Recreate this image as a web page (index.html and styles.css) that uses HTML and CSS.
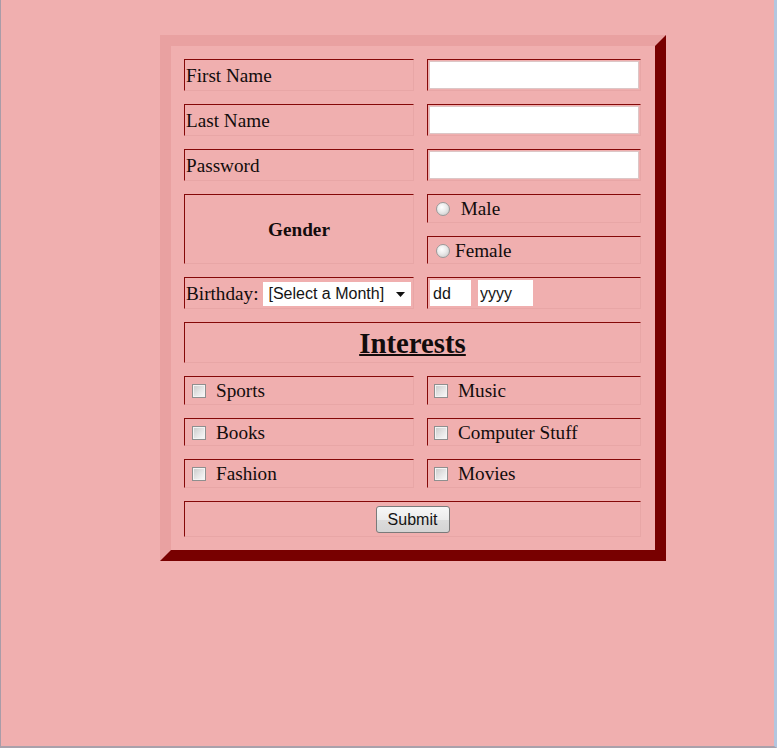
FILE: index.html
```html
<!DOCTYPE html>
<html lang="en">
<head>
<meta charset="utf-8">
<title>Registration Form</title>
<link rel="stylesheet" href="styles.css">
</head>
<body>
<div class="screen">
  <form class="form">
    <div class="cell label">First Name</div>
    <div class="cell field"><input class="text" type="text"></div>

    <div class="cell label">Last Name</div>
    <div class="cell field"><input class="text" type="text"></div>

    <div class="cell label">Password</div>
    <div class="cell field"><input class="text" type="password"></div>

    <div class="cell gender">Gender</div>
    <div class="cell option"><input class="radio" type="radio" name="g"><span class="male">&nbsp;Male</span></div>
    <div class="cell option"><input class="radio" type="radio" name="g"><span class="female">Female</span></div>

    <div class="cell label">Birthday:<span class="select-wrap"><select class="month"><option>[Select a Month]</option></select><svg class="arrow" width="9" height="5" viewBox="0 0 9 5"><polygon points="0,0 9,0 4.5,5" fill="#111"/></svg></span></div>
    <div class="cell date"><input class="dd" type="text" value="dd"><input class="yyyy" type="text" value="yyyy"></div>

    <div class="cell heading"><span>Interests</span></div>

    <div class="cell check"><input class="box" type="checkbox"><span>Sports</span></div>
    <div class="cell check right"><input class="box" type="checkbox"><span>Music</span></div>

    <div class="cell check"><input class="box" type="checkbox"><span>Books</span></div>
    <div class="cell check right"><input class="box" type="checkbox"><span>Computer Stuff</span></div>

    <div class="cell check"><input class="box" type="checkbox"><span>Fashion</span></div>
    <div class="cell check right"><input class="box" type="checkbox"><span>Movies</span></div>

    <div class="cell submit"><button class="btn" type="button">Submit</button></div>
  </form>
</div>
</body>
</html>
```
FILE: styles.css
```css
html, body {
  margin: 0;
  padding: 0;
  background: #f0afaf;
}

.screen {
  box-sizing: border-box;
  height: 748px;
  padding: 35px 0 0 159px;
  border-left: 1px solid #a99ca8;
  border-right: 3px solid #b3c6df;
  border-bottom: 2px solid #aaa1ab;
  font-family: "Liberation Serif", "Times New Roman", serif;
  font-size: 19.2px;
  color: #120c0c;
}

.form {
  display: grid;
  grid-template-columns: 230px 214px;
  grid-template-rows: 32px 32px 32px 29px 28px 32px 41px 29px 28px 29px 36px;
  gap: 13px;
  width: max-content;
  margin: 0;
  padding: 13px 14px 13px 13px;
  border: 11px solid;
  border-color: #e9a1a1 #780000 #780000 #e9a1a1;
  background: #f0afaf;
}

.cell {
  box-sizing: border-box;
  border: 1px solid;
  border-color: #850808 #e8a6a6 #e8a6a6 #850808;
  display: flex;
  align-items: center;
  white-space: nowrap;
}

.label {
  padding: 2px 0 0 1px;
}

.field {
  padding: 1px;
}

.text {
  box-sizing: border-box;
  width: 210px;
  height: 28px;
  margin: 0;
  border: 1px solid #dcc6c6;
  background: #fff;
}

.gender {
  grid-row: span 2;
  justify-content: center;
  padding-top: 2px;
  font-weight: bold;
}

.option {
  padding: 1px 0 0 8px;
}

.radio {
  appearance: none;
  box-sizing: border-box;
  width: 14px;
  height: 14px;
  margin: 0;
  border: 1px solid #9a9a9a;
  border-radius: 50%;
  background: radial-gradient(circle at 40% 35%, #ffffff 0%, #eaeaea 45%, #c4c4c4 100%);
}

.male {
  margin-left: 6px;
}

.female {
  margin-left: 5px;
}

.select-wrap {
  position: relative;
  display: inline-flex;
  margin: -1px 0 0 5px;
}

.month {
  appearance: none;
  box-sizing: border-box;
  width: 148px;
  height: 24px;
  margin: 0;
  padding: 0 0 0 5px;
  border: none;
  border-radius: 0;
  background: #fff;
  font-family: "Liberation Sans", Arial, sans-serif;
  font-size: 16px;
  color: #141414;
}

.arrow {
  position: absolute;
  right: 6px;
  top: 10px;
}

.date {
  padding-left: 2px;
  gap: 7px;
}

.dd, .yyyy {
  box-sizing: border-box;
  height: 26px;
  margin: 0;
  padding: 1px 0 0 3px;
  border: none;
  background: #fff;
  font-family: "Liberation Sans", Arial, sans-serif;
  font-size: 16px;
  color: #141414;
}

.dd {
  width: 41px;
}

.yyyy {
  width: 55px;
  padding-left: 2px;
}

.heading {
  grid-column: span 2;
  justify-content: center;
  padding-top: 2px;
  font-size: 28.8px;
  font-weight: bold;
  text-decoration: underline;
  text-decoration-thickness: 2px;
}

.check {
  padding: 1px 0 0 7px;
}

.check.right {
  padding-left: 6px;
}

.box {
  appearance: none;
  box-sizing: border-box;
  width: 14px;
  height: 14px;
  margin: 0 10px 0 0;
  border: 1px solid #8f8f8f;
  background: linear-gradient(135deg, #c9c9c9 0%, #e6e6e6 55%, #fafafa 100%);
  box-shadow: inset 0 0 0 1px #f4f4f4;
}

.submit {
  grid-column: span 2;
  justify-content: center;
}

.btn {
  box-sizing: border-box;
  width: 74px;
  height: 27px;
  margin: 1px 0 0;
  padding: 1px 0 0;
  border: 1px solid #7a7a7a;
  border-radius: 3px;
  background: linear-gradient(#f7f7f7 0%, #ececec 50%, #dcdcdc 51%, #d4d4d4 100%);
  font-family: "Liberation Sans", Arial, sans-serif;
  font-size: 16px;
  color: #141414;
}
```
